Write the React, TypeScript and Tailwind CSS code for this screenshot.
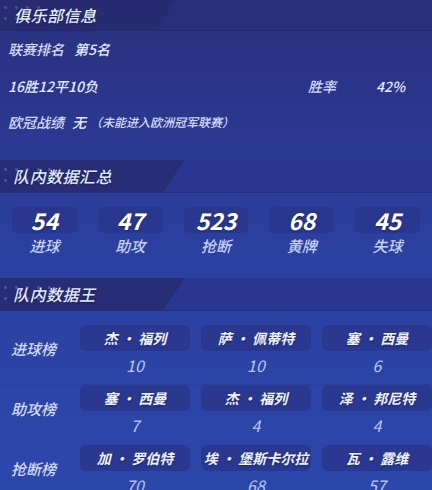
import React from 'react';

const FONT = "font-['Noto_Sans_CJK_SC','Noto_Sans',sans-serif]";

function SectionHeader({ title }: { title: string }) {
    return (
        <div className="relative h-[33px] bg-[#2a3790] border-b border-[#233078]">
            <div className="absolute inset-y-0 left-0 w-[185px] bg-[#262d74] [clip-path:polygon(0_0,100%_0,88%_100%,0_100%)]" />
            <div className="absolute left-0 top-[4px] h-[24px] w-[60px] opacity-60 bg-[radial-gradient(circle,rgba(170,190,255,0.45)_1.2px,transparent_1.8px)] bg-[length:11px_11px]" />
            <div className="relative flex h-full items-center pl-[13px] text-[16px] font-medium italic text-[#e4e9ff] tracking-[0.5px] [text-shadow:0_1px_2px_rgba(0,0,0,0.4)]">
                {title}
            </div>
        </div>
    );
}

const stats = [
    { value: '54', label: '进球' },
    { value: '47', label: '助攻' },
    { value: '523', label: '抢断' },
    { value: '68', label: '黄牌' },
    { value: '45', label: '失球' },
];

const boards = [
    {
        title: '进球榜',
        items: [
            { name: '杰 · 福列', value: '10' },
            { name: '萨 · 佩蒂特', value: '10' },
            { name: '塞 · 西曼', value: '6' },
        ],
    },
    {
        title: '助攻榜',
        items: [
            { name: '塞 · 西曼', value: '7' },
            { name: '杰 · 福列', value: '4' },
            { name: '泽 · 邦尼特', value: '4' },
        ],
    },
    {
        title: '抢断榜',
        items: [
            { name: '加 · 罗伯特', value: '70' },
            { name: '埃 · 堡斯卡尔拉', value: '68' },
            { name: '瓦 · 露维', value: '57' },
        ],
    },
];

export default function App() {
    return (
        <div className={`relative w-[432px] h-[490px] overflow-hidden bg-gradient-to-b from-[#29307e] via-[#2c40a0] to-[#2c47ac] ${FONT} text-[#e6ebff]`}>
            {/* cut-off decoration top right */}
            <div className="absolute right-[14px] top-[-10px] h-[13px] w-[13px] rounded-full border-2 border-white/80" />

            {/* Club info */}
            <div className="relative h-[31px] bg-[#28307a] border-b border-[#222a6c]">
                <div className="absolute inset-y-0 left-0 w-[175px] bg-[#272c70] [clip-path:polygon(0_0,100%_0,90%_100%,0_100%)]" />
                <div className="absolute left-0 top-[2px] h-[24px] w-[40px] opacity-50 bg-[radial-gradient(circle,rgba(170,190,255,0.45)_1.2px,transparent_1.8px)] bg-[length:11px_11px]" />
                <div className="relative flex h-full items-center pl-[14px] text-[16px] font-medium italic tracking-[0.5px] [text-shadow:0_1px_2px_rgba(0,0,0,0.4)]">
                    俱乐部信息
                </div>
            </div>
            <div className="flex h-[37px] items-center gap-[10px] border-b border-[#283488] pl-[8px] text-[14px] font-medium italic">
                <span className="text-[#d4dbf8]">联赛排名</span>
                <span>第5名</span>
            </div>
            <div className="flex h-[37px] items-center border-b border-[#283488] pl-[8px] text-[14px] font-medium italic">
                <span className="flex-1">16胜12平10负</span>
                <span className="w-[68px] text-[#d4dbf8]">胜率</span>
                <span className="w-[56px]">42%</span>
            </div>
            <div className="flex h-[35px] items-center gap-[8px] border-b border-[#2a378e] pl-[8px] text-[14px] font-medium italic">
                <span className="text-[#d4dbf8]">欧冠战绩</span>
                <span>无</span>
                <span className="-ml-[4px] text-[12px] text-[#d4dbf8]">（未能进入欧洲冠军联赛）</span>
            </div>

            {/* Team summary */}
            <div className="mt-[20px]">
                <SectionHeader title="队内数据汇总" />
            </div>
            <div className="flex gap-[21px] px-[12px] pt-[14px]">
                {stats.map((s) => (
                    <div key={s.label} className="flex w-[65px] flex-col items-center">
                        <div className="flex h-[26px] w-full items-center justify-center rounded-[5px] bg-[#2a368c]/80 text-[23px] font-bold italic leading-[26px] text-white [text-shadow:0_1px_2px_rgba(0,0,0,0.35)]">
                            {s.value}
                        </div>
                        <div className="mt-[4px] text-[15px] font-medium italic leading-[18px] text-[#c8d2f6]">{s.label}</div>
                    </div>
                ))}
            </div>

            {/* Team kings */}
            <div className="mt-[23px]">
                <SectionHeader title="队内数据王" />
            </div>
            <div className="pt-[14px]">
                {boards.map((b) => (
                    <div key={b.title} className="flex h-[60px] border-b border-[#2b3a98]/40">
                        <div className="w-[80px] pl-[11px] pt-[13px] text-[15px] font-medium italic text-[#d4dbf8]">{b.title}</div>
                        <div className="flex gap-[11px]">
                            {b.items.map((it) => (
                                <div key={it.name} className="flex w-[110px] flex-col items-center">
                                    <div className="flex h-[26px] w-full items-center justify-center whitespace-nowrap rounded-[6px] bg-[#2a368c]/85 text-[14px] font-bold italic text-[#eef1ff] [text-shadow:0_1px_2px_rgba(0,0,0,0.35)]">
                                        {it.name}
                                    </div>
                                    <div className="mt-[4px] text-[16px] italic leading-[20px] text-[#bcc7ef]">{it.value}</div>
                                </div>
                            ))}
                        </div>
                    </div>
                ))}
            </div>
        </div>
    );
}
